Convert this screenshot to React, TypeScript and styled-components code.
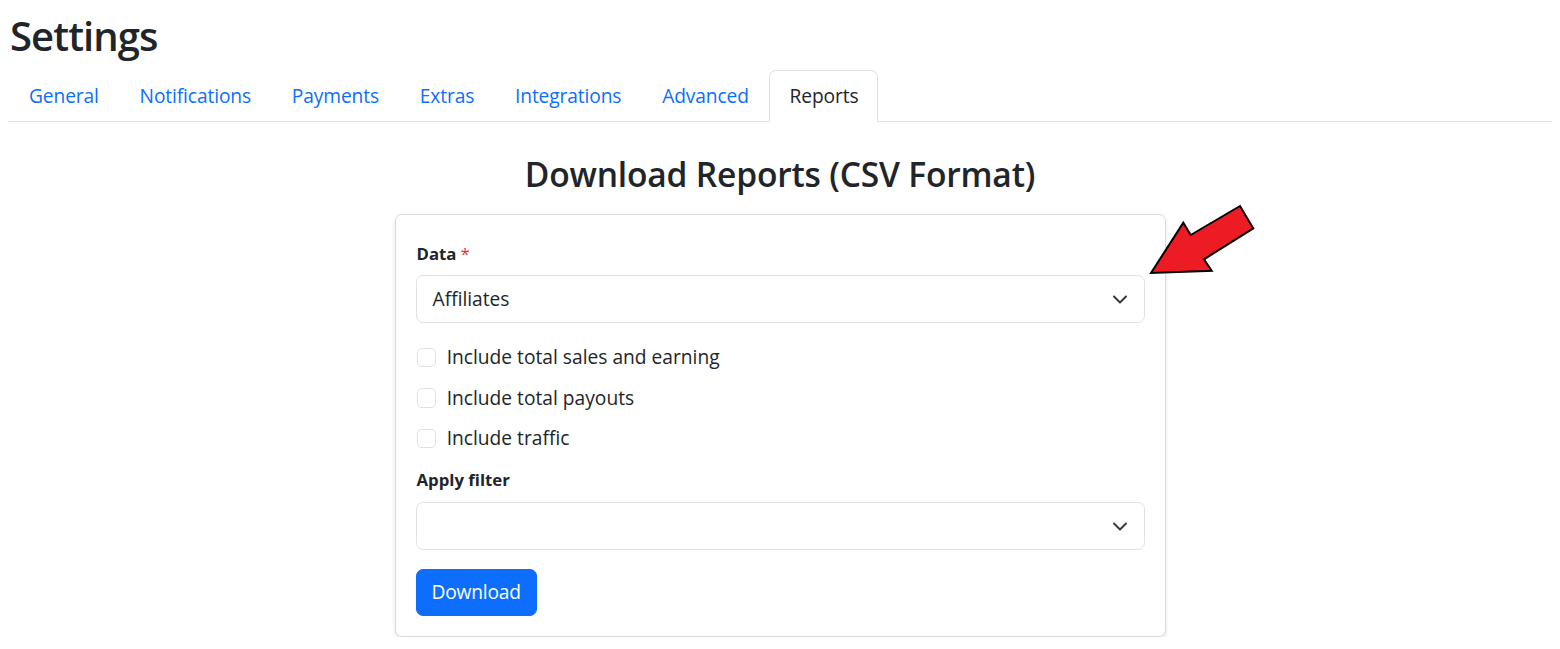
import React from "react";
import styled, { createGlobalStyle } from "styled-components";

const GlobalStyle = createGlobalStyle`
  html, body {
    margin: 0;
    padding: 0;
    background: #ffffff;
  }
  body {
    font-family: "Open Sans", "Noto Sans", "DejaVu Sans", sans-serif;
    color: #212529;
    font-size: 19.2px;
    line-height: 1.5;
  }
  * { box-sizing: border-box; }
`;

const Page = styled.div`
  position: relative;
  padding: 12px 8px 0 8px;
`;

const Title = styled.h1`
  margin: 0 0 10px 2px;
  font-size: 40px;
  font-weight: 600;
  line-height: 48px;
  color: #212529;
  letter-spacing: -0.9px;
`;

const Tabs = styled.nav`
  display: flex;
  border-bottom: 1px solid #dee2e6;
`;

const Tab = styled.a<{ $active?: boolean }>`
  display: block;
  margin-bottom: -1px;
  padding: 10.5px 18.8px 10.5px 20px;
  line-height: 28.8px;
  font-size: 19.2px;
  letter-spacing: -0.12px;
  text-decoration: none;
  cursor: pointer;
  color: ${(p) => (p.$active ? "#212529" : "#0d6efd")};
  background: ${(p) => (p.$active ? "#ffffff" : "transparent")};
  border: 1px solid ${(p) => (p.$active ? "#dee2e6" : "transparent")};
  border-bottom-color: ${(p) => (p.$active ? "#ffffff" : "transparent")};
  border-radius: 7px 7px 0 0;
`;

const Heading = styled.h3`
  margin: 32.5px 0 19px 0;
  text-align: center;
  font-size: 33.6px;
  font-weight: 600;
  line-height: 40.3px;
  color: #212529;
  letter-spacing: -0.2px;
`;

const Card = styled.div`
  width: 771px;
  margin: 0 auto;
  border: 1px solid #d7d9dc;
  border-radius: 7px;
  background: #ffffff;
  box-shadow: 0 2.4px 4.8px rgba(0, 0, 0, 0.09);
  padding: 26px 20px 20px 20px;
  display: flex;
  flex-direction: column;
`;

const Label = styled.label<{ $spaceTop?: number }>`
  display: block;
  font-size: 16.8px;
  font-weight: 700;
  line-height: 25.2px;
  margin: ${(p) => p.$spaceTop ?? 0}px 0 9.6px 1px;
`;

const Required = styled.span`
  color: #dc3545;
  font-weight: 400;
  margin-left: 4px;
`;

const SelectBox = styled.div`
  display: flex;
  align-items: center;
  justify-content: space-between;
  height: 48px;
  padding: 0 16px 0 16px;
  border: 1px solid #dee2e6;
  border-radius: 7px;
  font-size: 19.2px;
  color: #212529;
  background: #ffffff;
`;

const Chevron = styled.svg`
  width: 16px;
  height: 16px;
  flex: none;
`;

const CheckList = styled.div`
  display: flex;
  flex-direction: column;
  gap: 12px;
  margin-top: 19.5px;
`;

const CheckRow = styled.label`
  display: flex;
  align-items: center;
  gap: 11px;
  height: 28.8px;
  font-size: 19.2px;
  line-height: 28.8px;
  color: #212529;
  padding-left: 1px;
`;

const CheckBox = styled.span`
  display: block;
  width: 19.2px;
  height: 19.2px;
  border: 1px solid #dee2e6;
  border-radius: 4.8px;
  background: #ffffff;
  flex: none;
`;

const Button = styled.button`
  align-self: flex-start;
  margin-top: 19.5px;
  height: 47px;
  padding: 0 15px;
  border: 1px solid #0d6efd;
  border-radius: 7px;
  background: #0d6efd;
  color: #ffffff;
  font-family: inherit;
  font-size: 19.2px;
  line-height: 28.8px;
  letter-spacing: -0.2px;
  cursor: pointer;
`;

const Arrow = styled.svg`
  position: absolute;
  left: 1140px;
  top: 195px;
  width: 130px;
  height: 90px;
  overflow: visible;
`;

const ChevronIcon = () => (
  <Chevron viewBox="0 0 16 16">
    <path
      d="M2 5.5l6 6 6-6"
      fill="none"
      stroke="#343a40"
      strokeWidth="2"
      strokeLinecap="round"
      strokeLinejoin="round"
    />
  </Chevron>
);

const tabs = [
  "General",
  "Notifications",
  "Payments",
  "Extras",
  "Integrations",
  "Advanced",
  "Reports",
];

const checks = [
  "Include total sales and earning",
  "Include total payouts",
  "Include traffic",
];

export default function App() {
  return (
    <>
      <GlobalStyle />
      <Page>
        <Title>Settings</Title>
        <Tabs>
          {tabs.map((t) => (
            <Tab key={t} $active={t === "Reports"}>
              {t}
            </Tab>
          ))}
        </Tabs>
        <Heading>Download Reports (CSV Format)</Heading>
        <Card>
          <Label>
            Data<Required>*</Required>
          </Label>
          <SelectBox>
            <span>Affiliates</span>
            <ChevronIcon />
          </SelectBox>
          <CheckList>
            {checks.map((c) => (
              <CheckRow key={c}>
                <CheckBox />
                {c}
              </CheckRow>
            ))}
          </CheckList>
          <Label $spaceTop={13.5}>Apply filter</Label>
          <SelectBox>
            <span />
            <ChevronIcon />
          </SelectBox>
          <Button>Download</Button>
        </Card>
        <Arrow viewBox="0 0 130 90">
          <polygon
            points="11,78 43.3,27.7 50.7,40 100,11 113.3,33.3 64,64.3 71.7,75.7"
            fill="#ed1c24"
            stroke="#000000"
            strokeWidth="2"
            strokeLinejoin="miter"
          />
        </Arrow>
      </Page>
    </>
  );
}
